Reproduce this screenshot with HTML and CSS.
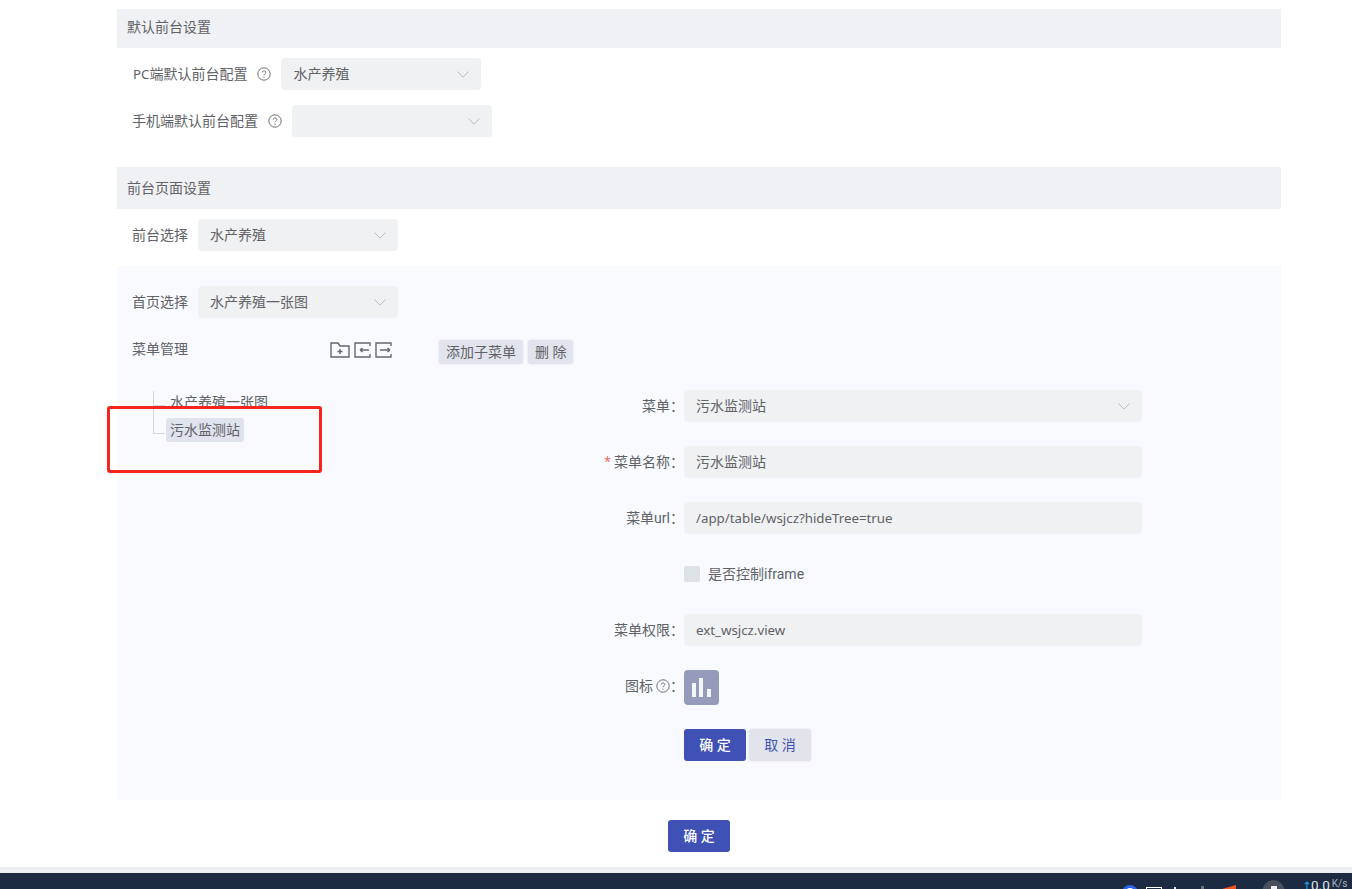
FILE: index.html
```html
<!DOCTYPE html>
<html lang="zh">
<head>
<meta charset="utf-8">
<title>前台设置</title>
<link rel="stylesheet" href="styles.css">
</head>
<body>
<main class="content">
  <h2 class="section-head first">默认前台设置</h2>
  <div class="row row-pc">
    <span class="lbl"><span class="latin">PC</span>端默认前台配置</span>
    <svg class="help help-gap" viewBox="0 0 14 14"><circle cx="7" cy="7" r="6.2"/><path d="M5.2 5.6c0-2.3 3.6-2.3 3.6-.1 0 1.3-1.8 1.4-1.8 2.8"/><path d="M7 9.6v1.1"/></svg>
    <div class="select"><span>水产养殖</span><svg class="chev" viewBox="0 0 12 7"><path d="M.6.6 6 6.2 11.4.6"/></svg></div>
  </div>
  <div class="row row-mobile">
    <span class="lbl">手机端默认前台配置</span>
    <svg class="help help-gap" viewBox="0 0 14 14"><circle cx="7" cy="7" r="6.2"/><path d="M5.2 5.6c0-2.3 3.6-2.3 3.6-.1 0 1.3-1.8 1.4-1.8 2.8"/><path d="M7 9.6v1.1"/></svg>
    <div class="select"><span></span><svg class="chev" viewBox="0 0 12 7"><path d="M.6.6 6 6.2 11.4.6"/></svg></div>
  </div>

  <h2 class="section-head second">前台页面设置</h2>
  <div class="row row-front">
    <span class="lbl lbl-gap">前台选择</span>
    <div class="select"><span>水产养殖</span><svg class="chev" viewBox="0 0 12 7"><path d="M.6.6 6 6.2 11.4.6"/></svg></div>
  </div>

  <section class="panel">
    <div class="row">
      <span class="lbl lbl-gap">首页选择</span>
      <div class="select"><span>水产养殖一张图</span><svg class="chev" viewBox="0 0 12 7"><path d="M.6.6 6 6.2 11.4.6"/></svg></div>
    </div>

    <div class="manage">
      <span class="lbl manage-title">菜单管理</span>
      <div class="tools">
        <svg class="tool tool-folder" viewBox="0 0 20 16"><path d="M1 1h7l2 3h9v11H1z"/><path d="M10 7v5M7.500 9.500h5"/></svg>
        <svg class="tool" viewBox="0 0 17 16"><path d="M16 4V1H1v14h15v-3"/><path d="M6 8h9M6 8l2.500-2M6 8l2.500 2"/></svg>
        <svg class="tool" viewBox="0 0 17 16"><path d="M16 4V1H1v14h15v-3"/><path d="M5 8h10M15 8l-2.500-2M15 8l-2.500 2"/></svg>
      </div>
      <div class="actions">
        <button class="mini">添加子菜单</button>
        <button class="mini">删 除</button>
      </div>
    </div>

    <div class="split">
      <ul class="tree">
        <li class="node"><span class="node-text">水产养殖一张图</span></li>
        <li class="node node-last"><span class="node-text is-current">污水监测站</span></li>
      </ul>

      <form class="form">
        <div class="f-row">
          <label class="f-lbl">菜单：</label>
          <div class="f-ctl select-wide"><span>污水监测站</span><svg class="chev" viewBox="0 0 12 7"><path d="M.6.6 6 6.2 11.4.6"/></svg></div>
        </div>
        <div class="f-row">
          <label class="f-lbl"><i class="req">*</i> 菜单名称：</label>
          <div class="f-ctl">污水监测站</div>
        </div>
        <div class="f-row">
          <label class="f-lbl">菜单url：</label>
          <div class="f-ctl latin">/app/table/wsjcz?hideTree=true</div>
        </div>
        <div class="f-row">
          <div class="f-lbl"></div>
          <div class="check"><span class="box"></span><span>是否控制iframe</span></div>
        </div>
        <div class="f-row">
          <label class="f-lbl">菜单权限：</label>
          <div class="f-ctl latin">ext_wsjcz.view</div>
        </div>
        <div class="f-row f-row-icon">
          <label class="f-lbl f-lbl-icon">图标<svg class="help help-in" viewBox="0 0 14 14"><circle cx="7" cy="7" r="6.2"/><path d="M5.2 5.6c0-2.3 3.6-2.3 3.6-.1 0 1.3-1.8 1.4-1.8 2.8"/><path d="M7 9.6v1.1"/></svg>：</label>
          <div class="icon-box"><svg viewBox="0 0 35 35"><path d="M8 13h4v14H8zM15 8h4v19h-4zM23 19h4v8h-4z"/></svg></div>
        </div>
        <div class="f-row f-row-btn">
          <div class="f-lbl"></div>
          <button type="button" class="btn primary">确 定</button>
          <button type="button" class="btn ghost">取 消</button>
        </div>
      </form>
    </div>
  </section>

  <div class="submit"><button class="btn primary">确 定</button></div>
</main>

<div class="annotation"></div>

<footer class="taskbar-wrap">
  <div class="band"></div>
  <div class="taskbar">
    <span class="tray tray-blue"></span>
    <span class="tray tray-white"></span>
    <span class="tray tray-line"></span>
    <span class="tray tray-gray"></span>
    <span class="tray tray-orange"></span>
    <span class="tray tray-circle"></span>
    <span class="speed"><b>↑</b>0.0<small>K/s</small></span>
  </div>
</footer>
</body>
</html>
```
FILE: styles.css
```css
* { box-sizing: border-box; }
html, body { margin: 0; height: 889px; overflow: hidden; }
body {
  position: relative;
  background: #fff;
  color: #606266;
  font: 14px/20px Roboto, "Noto Sans CJK SC", sans-serif;
  display: flex;
  flex-direction: column;
}
.latin { font-family: "Noto Sans", "Noto Sans CJK SC", sans-serif; font-size: 13.3px; }
.content { width: 1164px; margin-left: 117px; padding-top: 9px; height: 867px; }
.section-head {
  margin: 0;
  padding-left: 10px;
  background: #f0f1f5;
  font-size: 14px;
  font-weight: 400;
  display: flex;
  align-items: center;
}
.section-head.first { height: 39px; padding-bottom: 3px; }
.section-head.second { height: 42px; margin-top: 30px; }
.row { display: flex; align-items: center; height: 32px; padding-left: 15px; }
.row-pc { margin-top: 10px; padding-left: 16px; }
.row-mobile { margin-top: 15px; }
.row-front { margin-top: 10px; }
.lbl { white-space: nowrap; }
.lbl-gap { margin-right: 10px; }
.help { width: 14px; height: 14px; fill: none; stroke: #6f7175; stroke-width: 1; flex: none; }
.help-gap { margin: 0 10px 0 10px; }
.help-in { margin: 0 0 0 3px; vertical-align: -2px; }
.select, .select-wide {
  background: #f0f1f3;
  border-radius: 4px;
  display: flex;
  align-items: center;
  justify-content: space-between;
  padding: 0 12px;
}
.select { width: 200px; height: 32px; }
.chev { width: 12px; height: 7px; fill: none; stroke: #b9bcc2; stroke-width: 1; flex: none; }
.panel { margin-top: 15px; height: 534px; background: #f8faff; padding-top: 20px; }
.manage { display: flex; align-items: flex-start; height: 48px; padding: 22px 0 0 15px; }
.manage-title { width: 198px; margin-top: -1px; }
.tools { display: flex; gap: 4px; margin-top: 2px; width: 109px; }
.tool { height: 16px; width: 17px; fill: none; stroke: #66676a; stroke-width: 1.400; }
.tool-folder { width: 20px; }
.actions { display: flex; gap: 5px; }
.mini {
  height: 24px;
  padding: 0 7px;
  border: 0;
  border-radius: 3px;
  background: #e1e4ec;
  color: #606266;
  font: inherit;
  box-shadow: 0 0 2px rgba(200, 205, 220, .6);
}
.split { display: flex; }
.tree { list-style: none; margin: 22px 0 0 35px; padding: 0; width: 286px; flex: none; }
.node { position: relative; height: 28px; padding-left: 14px; display: flex; align-items: center; }
.node::before {
  content: "";
  position: absolute;
  left: 1px; top: 3px;
  width: 11px; height: 14px;
  border-left: 1px solid #d4d6da;
  border-bottom: 1px solid #d4d6da;
}
.node-last::before { top: -11px; height: 28px; }
.node-text { padding: 0 4px; height: 24px; line-height: 24px; border-radius: 3px; color: #606266; }
.is-current { background: #dfe3ed; }
.form { width: 709px; margin-top: 24px; margin-left: 70px; flex: none; }
.f-row { display: flex; align-items: center; height: 32px; margin-bottom: 24px; }
.f-lbl { width: 176px; flex: none; text-align: right; white-space: nowrap; }
.f-lbl-icon { padding-bottom: 3px; }
.req { color: #f56c6c; font-style: normal; }
.f-ctl {
  width: 458px;
  height: 32px;
  padding: 0 12px;
  line-height: 32px;
  background: #f0f1f3;
  border-radius: 4px;
}
.select-wide { width: 458px; height: 32px; }
.check { display: flex; align-items: center; gap: 8px; }
.box { width: 16px; height: 16px; border-radius: 2px; background: #dde2e6; }
.f-row-icon { height: 35px; margin-bottom: 24px; }
.icon-box { width: 35px; height: 35px; border-radius: 4px; background: #959bbb; }
.icon-box svg { display: block; width: 35px; height: 35px; fill: #f5f6fa; }
.btn {
  width: 62px;
  height: 32px;
  border: 0;
  border-radius: 3px;
  font: inherit;
  font-size: 14px;
}
.primary { background: #4051b5; color: #fff; font-weight: 500; }
.ghost { background: #e2e4ec; color: #4051b5; margin-left: 3px; box-shadow: 0 0 2px rgba(200, 205, 220, .6); }
.submit { display: flex; justify-content: center; margin-top: 20px; }
.annotation {
  position: absolute;
  left: 107px; top: 406px;
  width: 215px; height: 67px;
  border: 3px solid #f5241c;
  border-radius: 3px;
}
.taskbar-wrap { flex: none; }
.band { height: 6px; background: #eeeff3; }
.taskbar {
  height: 16px;
  background: #1c2b41;
  overflow: hidden;
  display: flex;
  justify-content: flex-end;
  align-items: flex-start;
  color: #dfe6ee;
  padding-right: 9px;
}
.tray { flex: none; display: block; }
.tray-blue { width: 16px; height: 16px; border-radius: 50%; border: 3px solid #2a62e8; background: #fff; margin: 12px 8px 0 0; }
.tray-white { width: 16px; height: 14px; border: 1px solid #fff; margin: 14px 12px 0 0; }
.tray-line { width: 2px; height: 12px; background: #dfe3ea; margin: 14px 19px 0 0; }
.tray-gray {
  width: 14px;
  height: 14px;
  margin: 13px 13px 0 0;
  background:
    linear-gradient(#6f7278, #6f7278) center top / 3px 100% no-repeat,
    linear-gradient(#6f7278, #6f7278) 0 3px / 100% 2px no-repeat;
}
.tray-orange { width: 14px; height: 16px; background: #f0501e; margin: 12px 26px 0 0; clip-path: polygon(0 25%, 100% 0, 100% 100%, 0 100%); }
.tray-circle { width: 23px; height: 26px; border-radius: 50%; background: #48505e; margin: 7px 17px 0 0; position: relative; }
.tray-circle::after { content: ""; position: absolute; left: 9px; top: 6px; width: 6px; height: 6px; background: #eef0f3; }
.speed { font-size: 13.5px; line-height: 16px; margin-top: 3px; white-space: nowrap; width: 41px; }
.speed b { color: #19a0e6; font-size: 10px; font-weight: 700; margin-right: -1px; }
.speed small { font-size: 10px; color: #aab3be; margin-left: 2px; vertical-align: 3px; }
```
